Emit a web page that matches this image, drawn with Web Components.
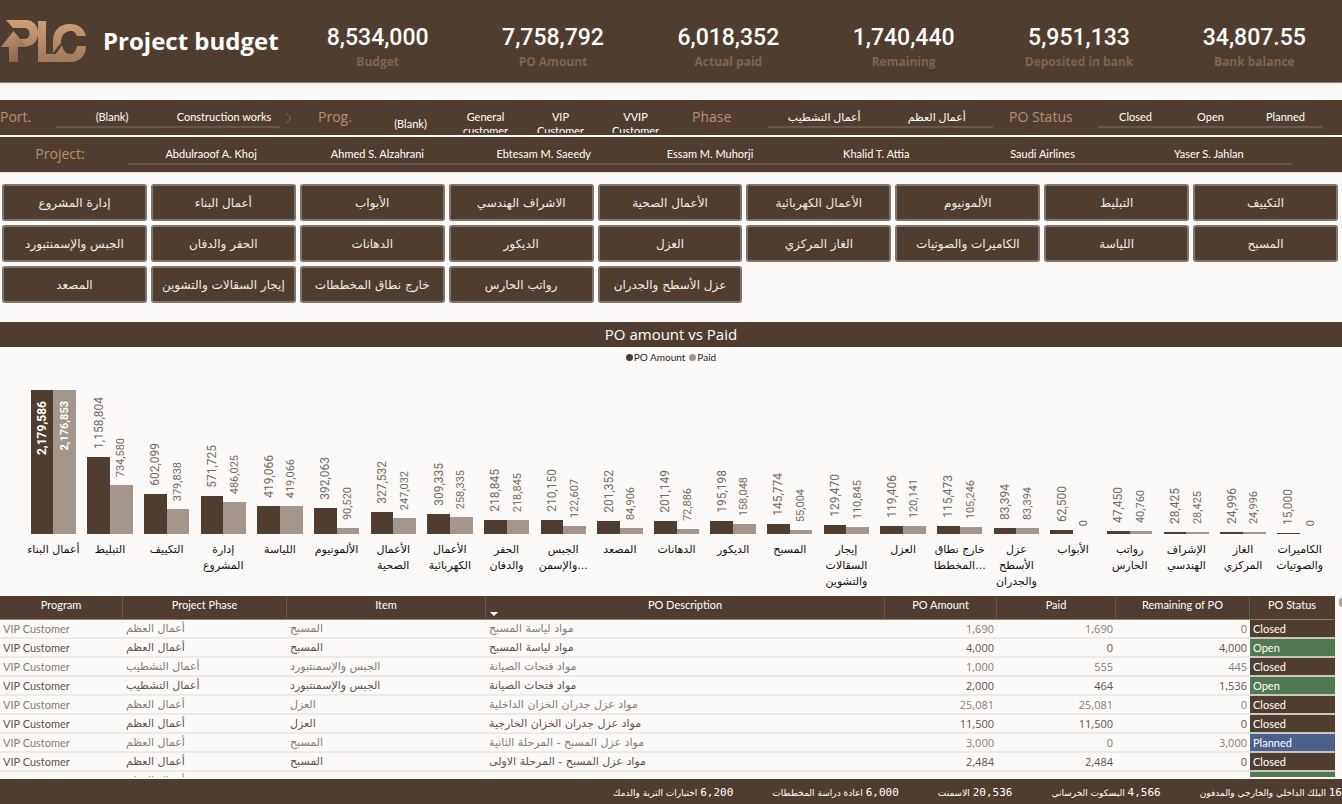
<!DOCTYPE html>
<html lang="en">
<head>
<meta charset="utf-8">
<title>Project budget</title>
<style>
  html, body { margin: 0; height: 100%; }
  body {
    --brown: #4f3e30;
    --line: #67584c;
    --copper: #b98f6c;
    --paid: #a3978d;
    --small: Lato, "DejaVu Sans", sans-serif;
    background: #fcfaf8;
    font-family: "Open Sans", "DejaVu Sans", sans-serif;
    font-size: 11px;
    overflow: hidden;
  }
</style>
</head>
<body>
<budget-dashboard></budget-dashboard>

<script>
const define = (name, template, setup) => {
  customElements.define(name, class extends HTMLElement {
    connectedCallback() {
      if (this.shadowRoot) return;
      const root = this.attachShadow({ mode: "open" });
      root.innerHTML = typeof template === "function" ? template(this) : template;
      if (setup) setup(root, this);
    }
  });
};

/* Company logo */
define("plc-logo", `
<style>
  :host { display: block; width: 88px; height: 48px; }
  svg { display: block; }
</style>
<svg width="88" height="48" viewBox="0 18 88 48" role="img" aria-label="PLC">
  <defs>
    <linearGradient id="g" x1="0" y1="20" x2="0" y2="64" gradientUnits="userSpaceOnUse">
      <stop offset="0" stop-color="#cfa077"/><stop offset=".5" stop-color="#b78b68"/><stop offset="1" stop-color="#9d775b"/>
    </linearGradient>
    <linearGradient id="a" x1="4" y1="34" x2="20" y2="64" gradientUnits="userSpaceOnUse">
      <stop offset="0" stop-color="#c3966f"/><stop offset="1" stop-color="#80604a"/>
    </linearGradient>
  </defs>
  <path fill="url(#g)" d="M6 21H26C42 21 42 47 27 47H25L20 40H25C31 40 31 29 25 29H13Z"/>
  <path fill="url(#a)" d="M13.500 32L27 48H18V63H9V48H1Z"/>
  <path fill="url(#g)" d="M38 22H46V55H57L51 63H38Z"/>
  <path fill="url(#g)" d="M86 37C84 29 78 25 70 25C58 25 53 33 53 42V54L61 44C61 36 65 32 71 32C74 32 76 34 77 37ZM62 46C63 52 66 55 71 55C74 55 76 52 77 47H86C86 57 79 63 71 63H50L56 55Z"/>
</svg>`);

/* One headline figure */
define("budget-kpi", el => `
<style>
  :host { display: flex; flex-direction: column; align-items: center; }
  strong { font: 500 23px/28px Roboto, sans-serif; color: #fff; }
  span { font-size: 12px; line-height: 20px; font-weight: 700; color: #80644f; }
</style>
<strong>${el.getAttribute("value")}</strong><span><slot></slot></span>`);

/* Row of underlined filter buttons */
define("filter-slicer", el => `
<style>
  :host { display: grid; grid-auto-flow: column; grid-auto-columns: minmax(0, 1fr); align-self: start; height: 28px; font-family: var(--small); }
  button {
    box-sizing: border-box; border: 0; border-bottom: 2px solid var(--line); background: none; color: #fff;
    font: inherit; line-height: 14px; padding: 8px 0 0; cursor: pointer; white-space: nowrap;
  }
  :host([wrap]) { height: 33px; overflow: hidden; }
  :host([wrap]) button { height: 48px; padding: 0 12px; border: 0; white-space: normal; }
</style>
${el.getAttribute("options").split("|").map(o => `<button type="button">${o}</button>`).join("")}`);

/* Work item buttons */
const items = ["إدارة المشروع", "أعمال البناء", "الأبواب", "الاشراف الهندسي", "الأعمال الصحية", "الأعمال الكهربائية", "الألمونيوم", "التبليط", "التكييف",
  "الجبس والإسمنتبورد", "الحفر والدفان", "الدهانات", "الديكور", "العزل", "الغاز المركزي", "الكاميرات والصوتيات", "اللياسة", "المسبح",
  "المصعد", "إيجار السقالات والتشوين", "خارج نطاق المخططات", "رواتب الحارس", "عزل الأسطح والجدران"];
define("item-tiles", `
<style>
  :host { display: grid; grid-template-columns: repeat(9, minmax(0, 1fr)); gap: 4px; padding: 0 4px 0 2px; }
  button {
    height: 37px; padding: 0; border: 2px solid #7d7670; border-radius: 3px; background: var(--brown); color: #f1ebe5;
    font: 12px/20px "DejaVu Sans", sans-serif; white-space: nowrap; cursor: pointer;
  }
</style>
${items.map(t => `<button type="button" dir="rtl">${t}</button>`).join("")}`);

/* Clustered column chart */
const data = [
  ["أعمال البناء", 2179586, 2176853], ["التبليط", 1158804, 734580], ["التكييف", 602099, 379838],
  ["إدارة|المشروع", 571725, 486025], ["اللياسة", 419066, 419066], ["الألمونيوم", 392063, 90520],
  ["الأعمال|الصحية", 327532, 247032], ["الأعمال|الكهربائية", 309335, 258335], ["الحفر|والدفان", 218845, 218845],
  ["الجبس|والإسمن...", 210150, 122607], ["المصعد", 201352, 84906], ["الدهانات", 201149, 72886],
  ["الديكور", 195198, 158048], ["المسبح", 145774, 55004], ["إيجار|السقالات|والتشوين", 129470, 110845],
  ["العزل", 119406, 120141], ["خارج نطاق|المخططا...", 115473, 105246], ["عزل|الأسطح|والجدران", 83394, 83394],
  ["الأبواب", 62500, 0], ["رواتب|الحارس", 47450, 40760], ["الإشراف|الهندسي", 28425, 28425],
  ["الغاز|المركزي", 24996, 24996], ["الكاميرات|والصوتيات", 15000, 0]];
const column = (kind, v) => {
  const h = Math.round(v / data[0][1] * 144), tall = h > 100;
  const label = `<span>${v.toLocaleString("en-US")}</span>`;
  return `<div class="col ${kind}${tall ? " in" : ""}">${tall ? "" : label}<div class="bar" style="height:${h}px">${tall ? label : ""}</div></div>`;
};
define("budget-chart", `
<style>
  :host { display: block; }
  h2 { margin: 0; background: var(--brown); color: #fff; font-weight: 400; font-size: 15px; line-height: 25px; text-align: center; }
  .legend { display: flex; justify-content: center; gap: 4px; font: 10px/20px var(--small); color: #252423; }
  .legend span { display: flex; align-items: center; gap: 1px; }
  .legend i { width: 7px; height: 7px; border-radius: 50%; background: var(--brown); }
  .legend span + span i { background: var(--paid); }
  .plot { display: grid; grid-template-columns: repeat(23, minmax(0, 1fr)); padding: 0 14px 0 25px; }
  .pair { display: flex; align-items: flex-end; height: 167px; padding: 0 10%; }
  .col { flex: 1; display: flex; flex-direction: column; align-items: center; gap: 8px; color: #706b66; }
  .bar { align-self: stretch; background: var(--brown); display: flex; justify-content: center; }
  .paid .bar { background: var(--paid); }
  .col span { writing-mode: vertical-rl; transform: rotate(180deg); font: 12px/16px Roboto, sans-serif; }
  .paid span { font-size: 11px; }
  .in span { margin-top: 11px; height: max-content; color: #fff; font-weight: 700; }
  .name { margin-top: 8px; height: 54px; text-align: center; font-family: "DejaVu Sans", sans-serif; line-height: 16px; white-space: nowrap; color: #111; display: flex; flex-direction: column; align-items: center; }
</style>
<h2>PO amount vs Paid</h2>
<div class="legend"><span><i></i>PO Amount</span><span><i></i>Paid</span></div>
<div class="plot">${data.map(([n, a, b]) => `<div><div class="pair">${column("po", a)}${column("paid", b)}</div><div class="name">${n.split("|").map(l => `<div>${l}</div>`).join("")}</div></div>`).join("")}</div>`);

/* Purchase orders */
const bone = "أعمال العظم", finish = "أعمال التشطيب", pool = "المسبح", gypsum = "الجبس والإسمنتبورد", insulation = "العزل";
const rows = [
  ["VIP Customer", bone, pool, "مواد لياسة المسبح", "1,690", "1,690", "0", "Closed"],
  ["VIP Customer", bone, pool, "مواد لياسة المسبح", "4,000", "0", "4,000", "Open"],
  ["VIP Customer", finish, gypsum, "مواد فتحات الصيانة", "1,000", "555", "445", "Closed"],
  ["VIP Customer", finish, gypsum, "مواد فتحات الصيانة", "2,000", "464", "1,536", "Open"],
  ["VIP Customer", bone, insulation, "مواد عزل جدران الخزان الداخلية", "25,081", "25,081", "0", "Closed"],
  ["VIP Customer", bone, insulation, "مواد عزل جدران الخزان الخارجية", "11,500", "11,500", "0", "Closed"],
  ["VIP Customer", bone, pool, "مواد عزل المسبح - المرحلة الثانية", "3,000", "0", "3,000", "Planned"],
  ["VIP Customer", bone, pool, "مواد عزل المسبح - المرحلة الاولى", "2,484", "2,484", "0", "Closed"],
  ["", bone, "", "", "", "", "", "Open"]];
const heads = [["Program", 123], ["Project Phase", 164], ["Item", 199], ["PO Description", 399], ["PO Amount", 112], ["Paid", 119], ["Remaining of PO", 134], ["PO Status", 85]];
define("po-table", `
<style>
  :host { display: flex; align-items: flex-start; gap: 4px; overflow: hidden; }
  table { flex: 1; table-layout: fixed; border-collapse: separate; border-spacing: 0; font-family: var(--small); }
  th {
    height: 24px; box-sizing: border-box; padding: 1px 0 0; vertical-align: top; background: var(--brown); color: #fff;
    font-weight: 400; line-height: 16px; border-right: 1px solid var(--line); border-bottom: 1px solid #8d8177; position: relative;
  }
  th:last-child { border-right-color: var(--brown); }
  th[aria-sort]::after { content: ""; position: absolute; left: 4px; bottom: 3px; border: 4px solid transparent; border-top-color: #fff; border-bottom: 0; }
  td { height: 19px; box-sizing: border-box; padding: 0 3px; line-height: 17px; border-bottom: 2px solid #ebebea; white-space: nowrap; overflow: hidden; color: #857c75; }
  tr:nth-child(even) td { color: #5c534c; }
  td:nth-child(n+2):nth-child(-n+4) { font-family: "DejaVu Sans", sans-serif; }
  td.num { text-align: right; font-family: "Open Sans", sans-serif; }
  tbody tr td.state.state { color: #fff; background: var(--state, var(--brown)) padding-box; border-bottom-color: #c9c6c1; }
  .Open { --state: #517a50; }
  .Planned { --state: #4a618c; }
  .thumb { width: 12px; height: 9px; margin: 2px -9px 0 0; border-radius: 3px; background: #a8a5a2; }
</style>
<table>
  <colgroup>${heads.map(h => `<col style="width:${h[1]}px">`).join("")}</colgroup>
  <thead><tr>${heads.map(h => `<th scope="col"${h[0] === "PO Description" ? ' aria-sort="descending"' : ""}>${h[0]}</th>`).join("")}</tr></thead>
  <tbody>${rows.map(r => `<tr>${r.map((c, i) => `<td class="${i > 6 ? "state " + c : i > 3 ? "num" : ""}">${c}</td>`).join("")}</tr>`).join("")}</tbody>
</table>
<div class="thumb"></div>`);

const costs = [["6,200", "اختبارات التربة والدمك"], ["6,000", "اعادة دراسة المخططات"], ["20,536", "الاسمنت"], ["4,566", "البسكوت الخرساني"], ["16", "البلك الداخلي والخارجي والمدفون"]];
define("cost-ticker", `
<style>
  :host { display: flex; justify-content: flex-end; gap: 39px; height: 25px; line-height: 25px; background: var(--brown); color: #fff; overflow: hidden; white-space: nowrap; }
  b { font: 11px "DejaVu Sans Mono", monospace; }
  span { font: 9px "DejaVu Sans", sans-serif; }
</style>
${costs.map(c => `<div dir="rtl"><b>${c[0]}</b> <span>${c[1]}</span></div>`).join("")}`);

/* Page frame */
define("budget-dashboard", `
<style>
  :host { display: flex; flex-direction: column; height: 100vh; }
  header { display: flex; align-items: center; height: 83px; background: var(--brown); border-bottom: 1px solid #8d8177; box-sizing: border-box; box-shadow: 0 2px 4px #0000000d; }
  h1 { margin: 0 0 0 15px; flex: 0 0 187px; font-size: 24px; line-height: 32px; font-weight: 700; color: #fff; white-space: nowrap; }
  .kpis { flex: 1; display: grid; grid-template-columns: repeat(6, minmax(0, 1fr)); padding-top: 14px; }
  .filters { display: grid; height: 35px; background: var(--brown); overflow: hidden; }
  .top { margin-top: 17px; grid-template-columns: 56fr 224fr 38fr 55fr 300fr 95fr 225fr 105fr 225fr 19fr; }
  .projects { margin-top: 2px; grid-template-columns: 128fr 1164fr 50fr; border-bottom: 1px solid #e6dfd8; }
  .filters > * { min-width: 0; }
  .label { font-size: 14px; line-height: 33px; color: var(--copper); white-space: nowrap; }
  .mid { text-align: center; padding-right: 8px; }
  .phase { padding-left: 19px; }
  .status { padding-left: 16px; }
  .top svg { margin: 12px 0 0 4px; }
  item-tiles { margin-top: 11px; }
  budget-chart { margin-top: 19px; }
  po-table { flex: 1; min-height: 0; margin-bottom: 2px; }
</style>
<header>
  <plc-logo></plc-logo>
  <h1>Project budget</h1>
  <div class="kpis">
    <budget-kpi value="8,534,000">Budget</budget-kpi>
    <budget-kpi value="7,758,792">PO Amount</budget-kpi>
    <budget-kpi value="6,018,352">Actual paid</budget-kpi>
    <budget-kpi value="1,740,440">Remaining</budget-kpi>
    <budget-kpi value="5,951,133">Deposited in bank</budget-kpi>
    <budget-kpi value="34,807.55">Bank balance</budget-kpi>
  </div>
</header>
<section class="filters top">
  <div class="label">Port.</div>
  <filter-slicer options="(Blank)|Construction works"></filter-slicer>
  <svg width="10" height="12" viewBox="0 0 10 12" fill="none" stroke="#7a6b5f" aria-hidden="true"><path d="M2 1l5 5-5 5"/></svg>
  <div class="label">Prog.</div>
  <filter-slicer wrap options="(Blank)|General customer|VIP Customer|VVIP Customer"></filter-slicer>
  <div class="label phase">Phase</div>
  <filter-slicer options="أعمال التشطيب|أعمال العظم"></filter-slicer>
  <div class="label status">PO Status</div>
  <filter-slicer options="Closed|Open|Planned"></filter-slicer>
</section>
<section class="filters projects">
  <div class="label mid">Project:</div>
  <filter-slicer options="Abdulraoof A. Khoj|Ahmed S. Alzahrani|Ebtesam M. Saeedy|Essam M. Muhorji|Khalid T. Attia|Saudi Airlines|Yaser S. Jahlan"></filter-slicer>
</section>
<item-tiles></item-tiles>
<budget-chart></budget-chart>
<po-table></po-table>
<cost-ticker></cost-ticker>`);
</script>
</body>
</html>
